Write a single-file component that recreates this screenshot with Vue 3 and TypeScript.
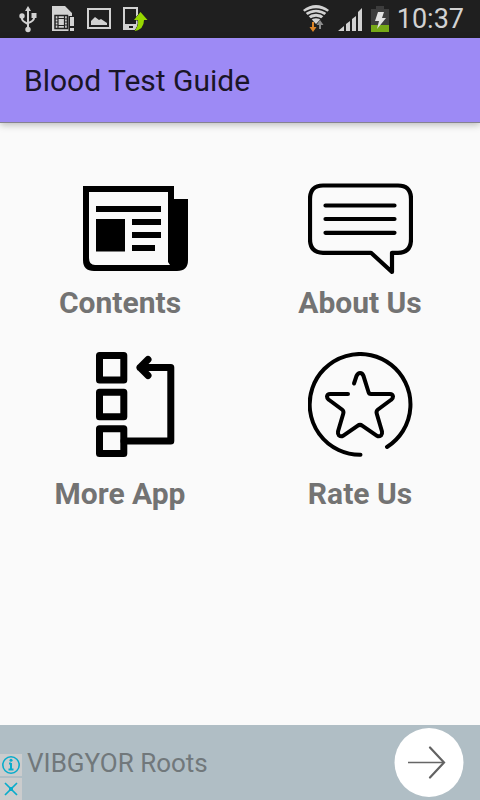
<script setup lang="ts">
import { ref } from 'vue'

type IconName = 'contents' | 'about' | 'more' | 'rate'

interface MenuItem {
  icon: IconName
  label: string
}

const title = ref<string>('Blood Test Guide')
const clock = ref<string>('10:37')

const items: MenuItem[] = [
  { icon: 'contents', label: 'Contents' },
  { icon: 'about', label: 'About Us' },
  { icon: 'more', label: 'More App' },
  { icon: 'rate', label: 'Rate Us' },
]
</script>

<template>
  <div class="screen">
    <div class="status">
      <div class="status-group notices">
        <svg width="20" height="28" viewBox="0 0 20 28" fill="none" stroke="#d2d2d2" stroke-width="2">
          <path d="M9 5v20M3 11v3q0 2 6 5M15 11v2q0 3-6 5" />
          <path d="M9 1l3 5H6z" fill="#d2d2d2" stroke="none" />
          <circle cx="3" cy="11" r="2.700" fill="#d2d2d2" stroke="none" />
          <rect x="12.500" y="8" width="5" height="5" fill="#d2d2d2" stroke="none" />
          <circle cx="9" cy="24.500" r="2.700" fill="#d2d2d2" stroke="none" />
        </svg>
        <svg width="24" height="28" viewBox="0 0 24 28">
          <path d="M1 1h13l7 7v3h-3v15H1z" fill="#d2d2d2" />
          <path d="M4 10.500h12.500v13H4z" fill="#d2d2d2" stroke="#222" stroke-width="1.500" />
          <path d="M7 11v12M13.500 11v12M4 14h3M4 17h3M4 20h3M13 14h3M13 17h3M13 20h3M7 13.500h6M7 20.500h6" stroke="#222" stroke-width="1.200" />
          <path d="M17.500 11h6v16h-6z" fill="#1f1f1f" />
          <path d="M19 12h4v9h-4zM19 23h4v3h-4z" fill="#d2d2d2" />
        </svg>
        <svg width="24" height="28" viewBox="0 0 24 28">
          <path d="M1 4h22v19H1z" fill="none" stroke="#d2d2d2" stroke-width="2" />
          <path d="M4 20v-4l4-4 4 3 2-1 3 2 3 2v2z" fill="#d2d2d2" />
        </svg>
        <svg width="26" height="28" viewBox="1 0 26 28">
          <path d="M1 2h15v23H1z" fill="#d2d2d2" />
          <path d="M3 4h11v15H3z" fill="#1f1f1f" />
          <rect x="7" y="21" width="4" height="2" fill="#1f1f1f" />
          <path d="M18.500 7l7 8h-3.500q0 10-10 11 5-4 4-11h-4z" fill="#97d700" stroke="#1f1f1f" stroke-width="1" paint-order="stroke" />
        </svg>
      </div>
      <div class="status-group signals">
        <svg width="28" height="30" viewBox="0 0 28 30">
          <path d="M1 6Q14-4 27 6L14 20z" fill="#d2d2d2" />
          <path d="M2 9Q14 1 26 9M4.500 12.500Q14 5.500 23.500 12.500M7.500 16Q14 11 20.500 16" fill="none" stroke="#1f1f1f" stroke-width="1.600" />
          <path d="M10 18h2v5h2.500L11 28l-3.500-5H10z" fill="#dd8528" />
          <path d="M17 25h2v-4h2.500L18 16l-3.500 5H17z" fill="#8c8c8c" />
        </svg>
        <svg width="25" height="30" viewBox="0 0 25 30">
          <path d="M0 27l6-5v5zM8 20l4-3v10H8zM14 15l4-3v15h-4zM20 8l4-4v23h-4z" fill="#d2d2d2" />
        </svg>
        <svg width="18" height="30" viewBox="0 0 18 30">
          <path d="M0 5h5V2h8v3h5v23H0z" fill="#3d3d3d" />
          <path d="M0 21h18v7H0z" fill="#76a818" />
          <path d="M7 8h6l-2 6h4L6 25l2-8H4z" fill="#e2e2e2" />
        </svg>
        <time class="clock">{{ clock }}</time>
      </div>
    </div>

    <header class="app-bar">
      <h1>{{ title }}</h1>
    </header>

    <main class="menu">
      <button v-for="item in items" :key="item.icon" class="tile" type="button">
        <svg v-if="item.icon === 'contents'" class="icon" viewBox="0 0 105 105">
          <path d="M0 10H91V23H105V84Q105 95 94 95H11Q0 95 0 84Z" fill="#000" />
          <path d="M6 16H85V86L87 89H12Q6 89 6 82Z" fill="#fafafa" />
          <path d="M13 30H78V36H13ZM13 43H42V75.500H13ZM49 43H78V49H49ZM49 56H78V62H49ZM49 69H72V75H49Z" fill="#000" />
        </svg>
        <svg v-else-if="item.icon === 'about'" class="icon line" viewBox="0 0 105 105" stroke-width="4.200">
          <path d="M15 9.500H90Q103 9.500 103 23V63Q103 76.800 90 76.800H84V96L63 76.800H15Q2 76.800 2 63V23Q2 9.500 15 9.500Z" />
          <path d="M17.500 29.500H86.500M17.500 43H86.500M17.500 56.800H86.500" />
        </svg>
        <svg v-else-if="item.icon === 'more'" class="icon line" viewBox="0 0 105 105" stroke-width="7">
          <path d="M16.500 3.500H40.800V28H16.500ZM16.500 40.200H40.800V64.800H16.500ZM16.500 76.800H40.800V101.500H16.500Z" />
          <path d="M41 89H87.800V15.500H57M65 7.500L57 15.500L65 23.500" />
        </svg>
        <svg v-else class="icon line" viewBox="0 0 105 105" stroke-width="4">
          <path d="M52.500 102.800A50.400 50.400 0 1 1 79 95" />
          <path d="M46 31.500L48.500 24Q50 21 52 21Q54.500 21 55.500 24L60.500 40Q61 42 63 42H82Q84.500 42 85 44.500Q85 46.500 83.500 47.500L70 57.500Q68 59 68.700 61.500L74 79.500Q74.500 82 73 83.500Q71 85 69 83.800L54.500 73.800Q52 72 49.500 73.800L35 83.800Q33 85 31 83.500Q29.500 82 30 79.500L35.300 61.500Q36 59 34 57.500L20.500 47.500Q19 46.500 19 44.500Q19.500 42 22 42H40" />
        </svg>
        <span class="label">{{ item.label }}</span>
      </button>
    </main>

    <footer class="ad">
      <div class="ad-marks">
        <button class="mark" type="button" aria-label="Ad information">
          <svg width="22" height="22" viewBox="0 0 22 22" fill="none" stroke="#0aaccb">
            <circle cx="11" cy="11" r="8.200" stroke-width="1.600" />
            <path d="M11 9v7M9 9.500h2M8.500 15.500h5" stroke-width="2" />
            <circle cx="11" cy="6.200" r="1.500" fill="#0aaccb" stroke="none" />
          </svg>
        </button>
        <button class="mark" type="button" aria-label="Close ad">
          <svg width="22" height="22" viewBox="0 0 22 22" fill="none" stroke="#0aaccb" stroke-width="1.700">
            <path d="M5 5l12 12M17 5L5 17" />
            <path d="M9 11h4M11 9v4" stroke-width="3" />
          </svg>
        </button>
      </div>
      <a class="ad-link" href="#">
        <span>VIBGYOR Roots</span>
        <svg class="go" viewBox="0 0 70 70">
          <circle cx="35" cy="34.500" r="34.500" fill="#fff" />
          <path d="M14 34.500H50" stroke="#666" stroke-width="1.300" />
          <path d="M36 19.500L50 34.500L36 49.500" fill="none" stroke="#626262" stroke-width="2.200" stroke-linecap="round" />
        </svg>
      </a>
    </footer>
  </div>
</template>

<style>
body {
  margin: 0;
  background: #fafafa;
}
</style>

<style scoped>
.screen {
  display: flex;
  flex-direction: column;
  min-height: 100vh;
  background: #fafafa;
  font-family: Roboto, "Liberation Sans", sans-serif;
}

svg {
  display: block;
  flex: none;
}

button {
  padding: 0;
  border: 0;
  background: none;
  font: inherit;
  cursor: pointer;
}

.status {
  display: flex;
  align-items: center;
  justify-content: space-between;
  height: 38px;
  padding: 0 16px 0 19px;
  background: #1f1f1f;
}

.status-group {
  display: flex;
  align-items: center;
}

.notices {
  gap: 12px;
}

.signals {
  gap: 8px;
}

.clock {
  color: #d2d2d2;
  font-size: 27px;
  line-height: 38px;
}

.app-bar {
  display: flex;
  align-items: center;
  box-sizing: border-box;
  height: 85px;
  padding: 2px 24px 0;
  background: #9d8af5;
  border-bottom: 1px solid #85828f;
  box-shadow: 0 2px 7px rgba(0, 0, 0, 0.25);
}

h1 {
  margin: 0;
  color: #1a1527;
  font-size: 30px;
  font-weight: 400;
  line-height: 40px;
}

.menu {
  flex: 1;
  display: grid;
  grid-template-columns: 1fr 1fr;
  align-content: start;
  row-gap: 29px;
  padding: 53px 0 24px;
}

.tile {
  display: flex;
  flex-direction: column;
  align-items: center;
  gap: 2px;
}

.tile:nth-child(n + 3) {
  gap: 17px;
}

.icon {
  width: 105px;
  height: 105px;
}

.tile:nth-child(odd) .icon {
  margin-left: 30px;
}

.line {
  fill: none;
  stroke: #000;
  stroke-linecap: round;
  stroke-linejoin: round;
}

.label {
  color: #737373;
  font-size: 30px;
  font-weight: 700;
  line-height: 40px;
}

.ad {
  display: flex;
  align-items: flex-end;
  height: 75px;
  background: #b0bec5;
}

.ad-marks {
  display: flex;
  flex-direction: column;
  gap: 2px;
}

.mark {
  background: #cbcccd;
}

.ad-link {
  flex: 1;
  display: flex;
  align-items: center;
  justify-content: space-between;
  height: 75px;
  padding: 0 16px 0 5px;
  color: #71787b;
  font-size: 26px;
  line-height: 32px;
  text-decoration: none;
}

.go {
  width: 70px;
  height: 70px;
}
</style>
